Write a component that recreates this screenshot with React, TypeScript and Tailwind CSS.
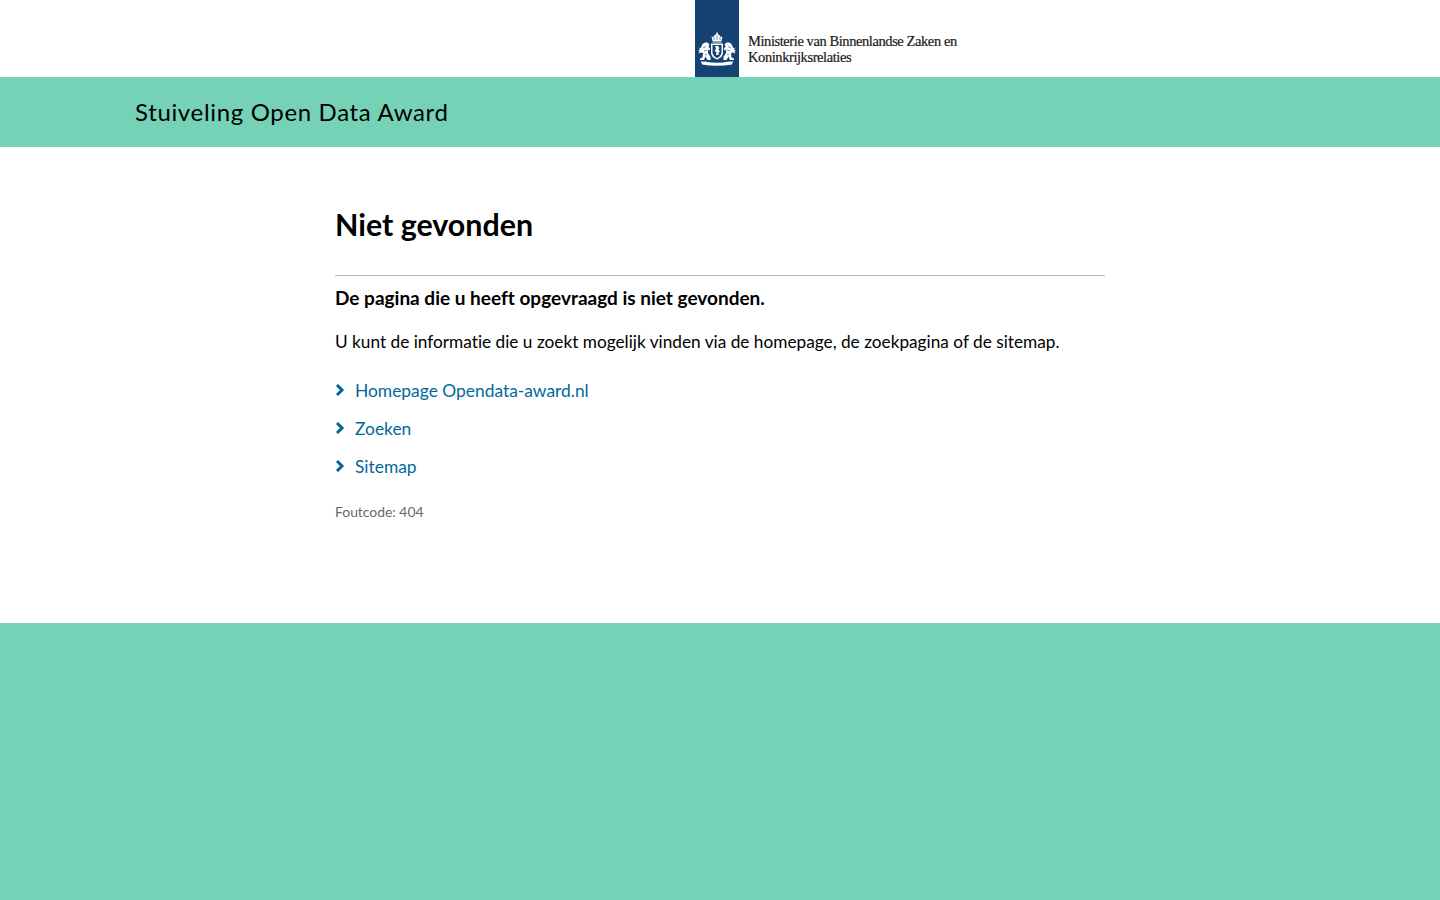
const font = "font-['Lato','Noto_Sans',sans-serif]";

function Crest() {
  return (
    <svg viewBox="0 0 44 45" className="absolute left-0 top-[25px] h-[45px] w-11" fill="#fff">
      {/* crown */}
      <path d="M17.500 16 L16.500 11.500 Q18 12.500 19 11 Q20 9.500 21.300 9.300 L21.300 7.500 L22.700 7.500 L22.700 9.300 Q24 9.500 25 11 Q26 12.500 27.500 11.500 L26.500 16 Z" />
      <path d="M19 15 V12 M22 15 V10.500 M25 15 V12" stroke="#154273" strokeWidth="0.6" />
      <rect x="17.500" y="16.500" width="9" height="1" />
      {/* shield */}
      <path d="M16 18.500 H28 V28 Q27.500 32.500 22 34.500 Q16.500 32.500 16 28 Z" />
      <path d="M17.500 20 H26.500 V27.500 Q26 31 22 33 Q18 31 17.500 27.500 Z" fill="#154273" />
      <path d="M20 21 L23 20.800 L24.500 23 L23.500 24.500 L25 27 L23.500 27.500 L23.500 30 L21 30 L21.500 27 L19.500 26 L21 24 Z" />
      {/* left lion */}
      <path d="M3 21.500 L4.500 23.500 L6 22.500 L7.500 19 L10 17.500 L12.500 17.500 L14.500 19.500 L13.500 21.500 L15 23.500 L15 25.500 L13 24.500 L13 28 L15.500 32 L15.500 35 L12.500 35 L10.500 31.500 L9 35 L5 35 L5 33.500 L7.500 32.500 L8 28 L6 27.500 L3.500 28.500 L4.500 26.500 L3 25.500 L5 25 Z" />
      <path d="M8 23 L11 21.500 M9 26 L12 25 M10 29 L12 30" stroke="#154273" strokeWidth="0.6" fill="none" />
      {/* right lion */}
      <path d="M41 21.500 L39.500 23.500 L38 22.500 L36.500 19 L34 17.500 L31.500 17.500 L29.500 19.500 L30.500 21.500 L29 23.500 L29 25.500 L31 24.500 L31 28 L28.500 32 L28.500 35 L31.500 35 L33.500 31.500 L35 35 L39 35 L39 33.500 L36.500 32.500 L36 28 L38 27.500 L40.500 28.500 L39.500 26.500 L41 25.500 L39 25 Z" />
      <path d="M36 23 L33 21.500 M35 26 L32 25 M34 29 L32 30" stroke="#154273" strokeWidth="0.6" fill="none" />
      {/* motto ribbon */}
      <path d="M6 36 Q8 37 10 36.500 Q22 39 34 36.500 Q36 37 38 36 L37 39.500 Q22 42 7 39.500 Z" />
    </svg>
  );
}

function Chevron() {
  return (
    <svg viewBox="0 0 10 12" className="h-3 w-2.5 shrink-0 -translate-y-px" fill="none" stroke="#01689b" strokeWidth="3">
      <path d="M2 1 L7 6 L2 11" />
    </svg>
  );
}

const links = ["Homepage Opendata-award.nl", "Zoeken", "Sitemap"];

export default function App() {
  return (
    <div className={`flex min-h-[900px] flex-col bg-white text-black [font-variant-ligatures:none] ${font}`}>
      <header className="h-[77px] pl-[695px]">
        <div className="relative h-[77px] w-[330px]">
          <div className="h-[77px] w-11 bg-[#154273]" />
          <Crest />
          <div className="absolute left-[53px] top-[34px] whitespace-nowrap font-['Liberation_Serif',serif] text-[14.500px] leading-[15.500px] tracking-[-0.42px] text-[#1a1a1a] [-webkit-text-stroke:0.2px_#1a1a1a]">
            Ministerie van Binnenlandse Zaken en
            <br />
            Koninkrijksrelaties
          </div>
        </div>
      </header>

      <div className="flex h-[70px] items-center bg-[#76d2b6] pl-[135px]">
        <span className="text-[24px] tracking-[0.66px]">Stuiveling Open Data Award</span>
      </div>

      <main className="mx-auto h-[476px] w-[770px] pt-[59px]">
        <h1 className="text-[30.400px] font-bold leading-[36px]">Niet gevonden</h1>
        <div className="mt-[33px] border-t border-[#b4b4b4] pt-[10px]">
          <p className="text-[19px] font-bold leading-[24px]">De pagina die u heeft opgevraagd is niet gevonden.</p>
          <p className="mt-[20px] text-[17.240px] leading-[24px]">
            U kunt de informatie die u zoekt mogelijk vinden via de homepage, de zoekpagina of de sitemap.
          </p>
          <ul className="mt-[25px] flex flex-col gap-[14px]">
            {links.map((l) => (
              <li key={l} className="flex h-[24px] items-center gap-[10px] text-[17.400px] leading-[24px] text-[#01689b]">
                <Chevron />
                <a href="#">{l}</a>
              </li>
            ))}
          </ul>
          <p className="mt-[23px] text-[13.900px] leading-[20px] text-[#696969]">Foutcode: 404</p>
        </div>
      </main>

      <footer className="h-[277px] bg-[#76d2b6]" />
    </div>
  );
}
